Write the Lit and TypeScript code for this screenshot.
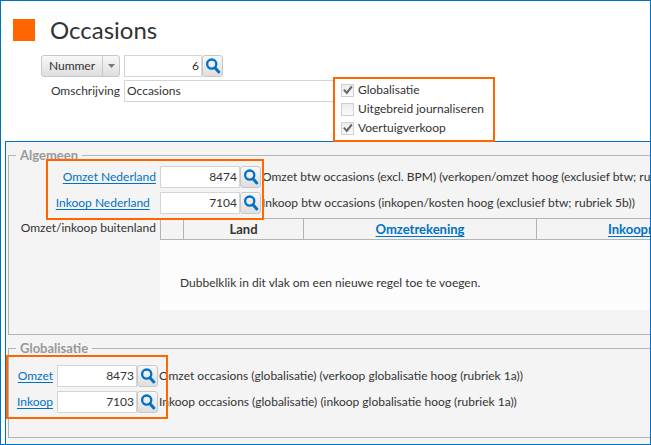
import { LitElement, html, css, nothing } from "lit";
import { customElement, property } from "lit/decorators.js";

@customElement("search-field")
class SearchField extends LitElement {
  @property() value = "";
  @property() label = "";

  static styles = css`
    :host {
      display: flex;
      height: 22px;
    }
    .value {
      box-sizing: border-box;
      flex: 1;
      min-width: 0;
      border: 1px solid #d4d4d4;
      padding: 0 2px 1px;
      background: #fff;
      color: #333;
      font: inherit;
      text-align: right;
      outline: none;
    }
    .search {
      display: flex;
      align-items: center;
      justify-content: center;
      box-sizing: border-box;
      width: 21px;
      border: 1px solid #c8c8c8;
      border-radius: 3px;
      padding: 0;
      background: linear-gradient(#f8f8f8, #dedede);
    }
    .glass {
      flex: none;
      width: 16px;
      height: 16px;
    }
  `;

  render() {
    return html`
      <input class="value" type="text" aria-label=${this.label} .value=${this.value} />
      <button class="search" type="button" aria-label="Zoek ${this.label}">
        <svg class="glass" viewBox="0 0 16 16" fill="none" stroke="#0072c6">
          <circle cx="6.7" cy="6.1" r="4.6" stroke-width="2.3" />
          <path d="M10 9.8 L13.8 14" stroke-width="3" stroke-linecap="round" />
        </svg>
      </button>
    `;
  }
}

interface Account {
  label: string;
  trailing?: boolean;
  number: string;
  description: string;
}

const general: Account[] = [
  {
    label: "Omzet Nederland",
    number: "8474",
    description: "Omzet btw occasions (excl. BPM) (verkopen/omzet hoog (exclusief btw; rubriek 1a))",
  },
  {
    label: "Inkoop Nederland",
    trailing: true,
    number: "7104",
    description: "Inkoop btw occasions (inkopen/kosten hoog (exclusief btw; rubriek 5b))",
  },
];

const global: Account[] = [
  {
    label: "Omzet",
    number: "8473",
    description: "Omzet occasions (globalisatie) (verkoop globalisatie hoog (rubriek 1a))",
  },
  {
    label: "Inkoop",
    number: "7103",
    description: "Inkoop occasions (globalisatie) (inkoop globalisatie hoog (rubriek 1a))",
  },
];

const options = [
  { label: "Globalisatie", checked: true },
  { label: "Uitgebreid journaliseren", checked: false },
  { label: "Voertuigverkoop", checked: true },
];

@customElement("app-root")
class AppRoot extends LitElement {
  static styles = css`
    :host {
      display: block;
      color: #333;
      font: 12px/16px Lato, "Open Sans", sans-serif;
    }
    .page {
      position: relative;
      box-sizing: border-box;
      min-height: 100vh;
      overflow: hidden;
      border: 1px solid #0072c6;
      background: #fff;
    }
    .header {
      display: flex;
      align-items: center;
      gap: 15px;
      padding: 8px 12px 4px;
    }
    .mark {
      width: 22px;
      height: 22px;
      background: #ff6600;
    }
    .title {
      margin: 0;
      font-size: 24px;
      font-weight: 400;
      line-height: 42px;
    }
    .form {
      display: grid;
      grid-template-columns: 79px 1fr;
      gap: 3px 4px;
      align-items: center;
      padding-left: 40px;
    }
    .split {
      display: flex;
      box-sizing: border-box;
      height: 22px;
      border: 1px solid #c8c8c8;
      border-radius: 3px;
      background: linear-gradient(#f8f8f8, #dedede);
    }
    .split-main,
    .split-arrow {
      display: flex;
      align-items: center;
      justify-content: center;
      border: 0;
      padding: 0;
      background: none;
      color: inherit;
      font: inherit;
    }
    .split-main {
      flex: 1;
    }
    .split-arrow {
      width: 17px;
      border-left: 1px solid #c8c8c8;
    }
    .arrow {
      width: 7px;
      height: 4px;
    }
    .number {
      width: 99px;
    }
    .form-label {
      text-align: right;
    }
    .description {
      box-sizing: border-box;
      width: 240px;
      height: 22px;
      border: 1px solid #d4d4d4;
      padding: 0 2px 1px;
      color: inherit;
      font: inherit;
      outline: none;
    }
    .marked {
      box-sizing: border-box;
      position: absolute;
      border: 2px solid #ff6600;
    }
    .options {
      top: 76px;
      left: 332px;
      display: grid;
      gap: 3px;
      z-index: 1;
      width: 162px;
      padding: 3px 6px 4px;
      background: #fff;
    }
    .option {
      display: flex;
      align-items: center;
      gap: 4px;
      white-space: nowrap;
    }
    .check {
      appearance: none;
      flex: none;
      box-sizing: border-box;
      width: 13px;
      height: 13px;
      margin: 0;
      border: 1px solid #d0d0d0;
      background: linear-gradient(#ededed, #fafafa);
    }
    .check:checked::before {
      content: "";
      display: block;
      width: 11px;
      height: 11px;
      background: #666;
      clip-path: polygon(10% 53%, 24% 42%, 42% 62%, 83% 12%, 96% 24%, 44% 90%);
    }
    .panel {
      margin: 39px 0 0 4px;
      overflow: hidden;
      border: 1px solid #0072c6;
      border-width: 1px 0 0 1px;
      padding: 5px 0 6px 2px;
      background: #f4f4f4;
    }
    .group {
      position: relative;
      margin: 0 -20px 0 0;
      border: 1px solid #b4b4b4;
      padding: 3px 0 24px;
    }
    .group + .group {
      margin-top: 5px;
      padding-top: 9px;
    }
    .legend {
      margin-left: 7px;
      padding: 0 4px;
      color: #999;
      font-size: 13px;
      font-weight: 700;
    }
    .rows {
      display: grid;
      grid-template-columns: 147px 101px 1fr;
      gap: 4px;
      align-items: center;
    }
    .rows-short {
      grid-template-columns: 44px 101px 1fr;
    }
    .row-label {
      text-align: right;
      white-space: pre;
    }
    .link {
      color: #0072c6;
      text-decoration: underline;
      text-underline-offset: 2px;
    }
    .row-text {
      margin-left: -4px;
      padding-left: 1px;
      white-space: nowrap;
    }
    .lines-label {
      align-self: start;
      padding-top: 2px;
    }
    .lines {
      grid-column: 2 / -1;
    }
    .table {
      width: 609px;
      table-layout: fixed;
      border-collapse: separate;
      border-spacing: 0;
    }
    .handle {
      width: 23px;
    }
    .country {
      width: 120px;
    }
    .head {
      box-sizing: border-box;
      height: 22px;
      border: 1px solid #b4b4b4;
      border-width: 1px 0 1px 1px;
      padding: 0;
      font-size: 13px;
      font-weight: 700;
    }
    .empty {
      box-sizing: border-box;
      height: 70px;
      padding: 16px 0 0 20px;
      background: #fcfcfc;
    }
    .mark-general {
      top: -4px;
      left: 37px;
      width: 218px;
      height: 61px;
    }
    .mark-global {
      top: -1px;
      left: -3px;
      width: 162px;
      height: 64px;
    }
  `;

  private account(a: Account) {
    return html`
      <span class="row-label"><a class="link" href="#">${a.label}</a>${a.trailing ? "  " : nothing}</span>
      <search-field .label=${a.label} .value=${a.number}></search-field>
      <span class="row-text">${a.description}</span>
    `;
  }

  render() {
    return html`
      <main class="page">
        <header class="header">
          <span class="mark"></span>
          <h1 class="title">Occasions</h1>
        </header>
        <div class="form">
          <div class="split">
            <button class="split-main" type="button">Nummer</button>
            <button class="split-arrow" type="button" aria-label="Kies zoekveld">
              <svg class="arrow" viewBox="0 0 7 4"><path d="M0 0H7L3.5 4Z" fill="#777" /></svg>
            </button>
          </div>
          <search-field class="number" .label=${"Nummer"} .value=${"6"}></search-field>
          <label class="form-label" for="description">Omschrijving</label>
          <input class="description" id="description" type="text" .value=${"Occasions"} />
        </div>
        <div class="marked options">
          ${options.map(
            (o) => html`
              <label class="option">
                <input class="check" type="checkbox" .checked=${o.checked} />${o.label}
              </label>
            `
          )}
        </div>
        <section class="panel">
          <fieldset class="group">
            <legend class="legend">Algemeen</legend>
            <div class="rows">
              ${general.map((a) => this.account(a))}
              <span class="row-label lines-label">Omzet/inkoop buitenland</span>
              <div class="lines">
                <table class="table">
                  <thead>
                    <tr>
                      <th class="head handle"></th>
                      <th class="head country">Land</th>
                      <th class="head"><a class="link" href="#">Omzetrekening</a></th>
                      <th class="head"><a class="link" href="#">Inkooprekening</a></th>
                    </tr>
                  </thead>
                  <tbody>
                    <tr>
                      <td class="empty" colspan="4">Dubbelklik in dit vlak om een nieuwe regel toe te voegen.</td>
                    </tr>
                  </tbody>
                </table>
              </div>
            </div>
            <div class="marked mark-general"></div>
          </fieldset>
          <fieldset class="group">
            <legend class="legend">Globalisatie</legend>
            <div class="rows rows-short">${global.map((a) => this.account(a))}</div>
            <div class="marked mark-global"></div>
          </fieldset>
        </section>
      </main>
    `;
  }
}
